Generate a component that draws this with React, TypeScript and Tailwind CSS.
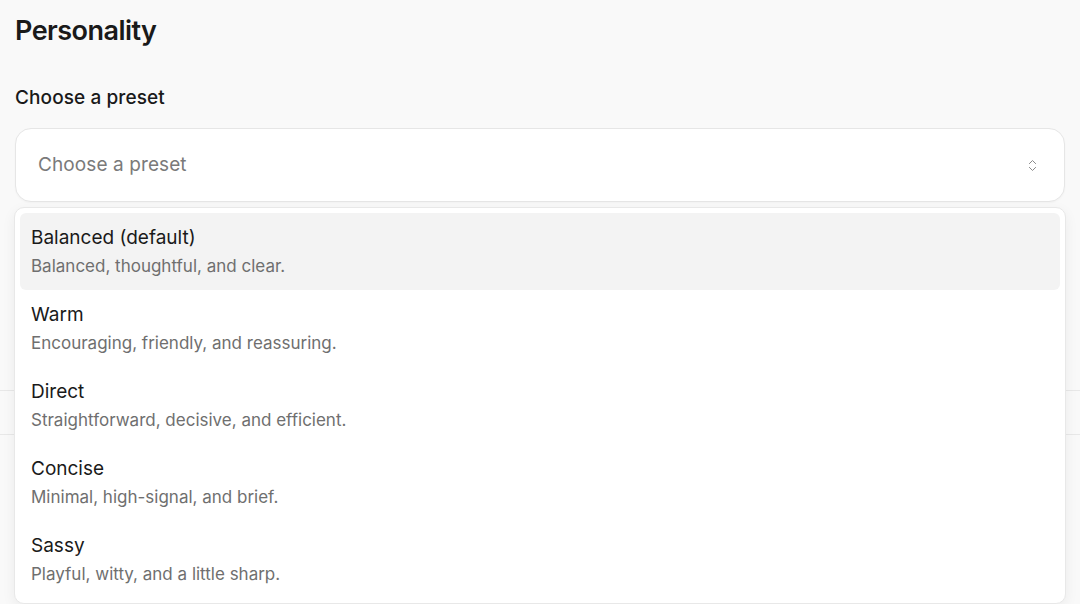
import { ChevronsUpDown } from 'lucide-react';

/* ── Presets ─────────────────────────────────────────────────────────────── */

const PRESETS = [
  { label: 'Balanced (default)', hint: 'Balanced, thoughtful, and clear.' },
  { label: 'Warm', hint: 'Encouraging, friendly, and reassuring.' },
  { label: 'Direct', hint: 'Straightforward, decisive, and efficient.' },
  { label: 'Concise', hint: 'Minimal, high-signal, and brief.' },
  { label: 'Sassy', hint: 'Playful, witty, and a little sharp.' },
] as const;

const ACTIVE = 0;

export default function App() {
  return (
    <div className="h-screen w-full bg-[#f9f9f9] font-['Inter',sans-serif] text-[#1a1a1a] overflow-hidden">
      <div className="px-[15px] pt-[14px]">
        <h1 className="text-[27px] font-semibold tracking-[-0.02em] leading-[34px]">Personality</h1>

        <label className="block mt-[36px] text-[19px] font-medium leading-[28px] tracking-[0.005em]">
          Choose a preset
        </label>

        {/* Select + open listbox */}
        <div className="relative z-10 mt-[16px]">
          <button className="w-full h-[74px] flex items-center justify-between pl-[22px] pr-[24px] bg-white border border-[#e6e6e6] rounded-[16px] shadow-[0_1px_2px_rgba(0,0,0,0.03)]">
            <span className="text-[19px] text-[#7a7a7a] tracking-[0.005em]">Choose a preset</span>
            <ChevronsUpDown size={15} strokeWidth={1.6} className="text-[#8a8a8a]" />
          </button>

          <ul className="absolute top-full left-[-1px] right-[-1px] mt-[5px] p-[5px] bg-white border border-[#e8e8e8] rounded-[10px] shadow-[0_4px_14px_rgba(0,0,0,0.06)]">
            {PRESETS.map((p, i) => (
              <li
                key={p.label}
                className={[
                  'h-[77px] flex flex-col justify-center px-[11px] rounded-[6px]',
                  i === ACTIVE ? 'bg-[#f3f3f3]' : '',
                ].join(' ')}
              >
                <span className="text-[19px] leading-[26px] text-[#1a1a1a]">{p.label}</span>
                <span className="text-[17px] leading-[24px] mt-[3px] text-[#6f6f6f]">{p.hint}</span>
              </li>
            ))}
          </ul>
        </div>
      </div>

      {/* Settings dividers underneath the listbox */}
      <div className="h-[189px] border-b border-[#e8e8e8]" />
      <div className="h-[44px] border-b border-[#e8e8e8]" />
    </div>
  );
}
